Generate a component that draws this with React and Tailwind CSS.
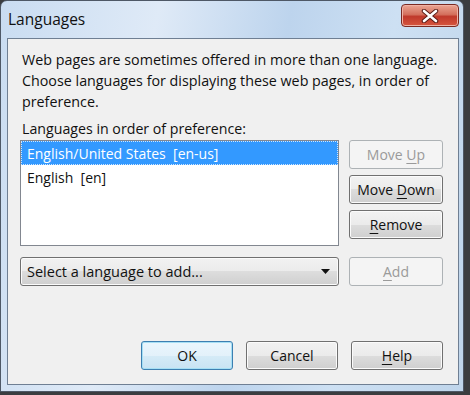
import React from "react";

function Btn({ children, className = "", disabled = false, isDefault = false }) {
  const base =
    "flex items-center justify-center h-[29px] rounded-[3px] border text-[14px] leading-none select-none";
  const look = disabled
    ? "border-[#adb2b5] bg-[#f4f4f4] text-[#9a9a9a]"
    : isDefault
    ? "border-[#3c7fb1] bg-[linear-gradient(#eaf6fd,#e3f1fa_50%,#d5ebf7_50%,#c8e3f3)] shadow-[inset_0_0_0_1px_#a6dff4] text-[#111]"
    : "border-[#707070] bg-[linear-gradient(#f2f2f2,#ebebeb_50%,#dddddd_50%,#cfcfcf)] shadow-[inset_0_0_0_1px_#fbfbfb] text-[#111]";
  return (
    <div className={`${base} ${look} ${className}`}>
      <span className="whitespace-pre">{children}</span>
    </div>
  );
}

function U({ children }) {
  return <span className="underline underline-offset-[3px] decoration-1">{children}</span>;
}

export default function App() {
  return (
    <div className="w-[470px] h-[395px] bg-[#3b3d40] overflow-hidden font-['Open_Sans',sans-serif] text-[#111]">
      <div className="w-[464px] h-[392px] rounded-t-[7px] border border-[#4e5866] bg-[linear-gradient(100deg,#c9dcf1_0%,#dfeaf7_30%,#bdd4ed_55%,#cde0f3_75%,#bfd5eb_100%)] flex flex-col">
        {/* Title bar */}
        <div className="h-[37px] flex items-start justify-between pl-[7px] pr-[4px]">
          <div className="mt-[8px] text-[15.5px] leading-[20px] text-[#111]">Languages</div>
          <div className="mt-[3px] w-[58px] h-[23px] rounded-[4px] border border-[#7a2a22] bg-[linear-gradient(#eba593,#d4705d_45%,#c0392b_55%,#d6563f)] shadow-[inset_0_0_0_1px_#f0b2a5] flex items-center justify-center">
            <svg width="18" height="14" viewBox="0 0 18 14">
              <path d="M3 2 L15 12 M15 2 L3 12" stroke="#5a1c16" strokeWidth="4.5" strokeLinecap="round" />
              <path d="M3 2 L15 12 M15 2 L3 12" stroke="#ffffff" strokeWidth="2.6" strokeLinecap="round" />
            </svg>
          </div>
        </div>

        {/* Client area */}
        <div className="ml-[6px] mr-[4px] mb-[6px] flex-1 border border-[#6f7f93] bg-[#f0f0f0] flex flex-col pl-[12px] pr-[15px] pt-[10px] pb-[14px]">
          <p className="ml-[2px] text-[14.3px] leading-[21px] whitespace-nowrap">
            Web pages are sometimes offered in more than one language.
            <br />
            Choose languages for displaying these web pages, in order of
            <br />
            preference.
          </p>
          <div className="ml-[2px] mt-[6px] text-[14.2px] leading-[21px] whitespace-nowrap">Languages in order of preference:</div>

          <div className="mt-[1px] flex gap-[10px]">
            <div className="flex-1 h-[106px] border border-[#828790] bg-white flex flex-col">
              <div className="h-[24px] bg-[#3399ff] border border-dotted border-[#cfe6ff] text-white text-[14px] flex items-center pl-[5px] whitespace-pre">
                English/United States  [en-us]
              </div>
              <div className="h-[24px] text-[14px] flex items-center pl-[6px] whitespace-pre">English  [en]</div>
            </div>
            <div className="w-[94px] flex flex-col gap-[6px]">
              <Btn disabled>
                Move <U>U</U>p
              </Btn>
              <Btn className="text-[14.8px]">
                Move <U>D</U>own
              </Btn>
              <Btn>
                <U>R</U>emove
              </Btn>
            </div>
          </div>

          <div className="mt-[11px] flex gap-[10px]">
            <div className="flex-1 h-[29px] rounded-[3px] border border-[#707070] bg-[linear-gradient(#f2f2f2,#ebebeb_50%,#dddddd_50%,#cfcfcf)] shadow-[inset_0_0_0_1px_#fbfbfb] flex items-center justify-between pl-[6px] pr-[8px] text-[14.5px]">
              <span className="whitespace-nowrap">Select a language to add...</span>
              <svg width="9" height="5" viewBox="0 0 9 5">
                <path d="M0 0 H9 L4.5 5 Z" fill="#111" />
              </svg>
            </div>
            <Btn disabled className="w-[94px]">
              <U>A</U>dd
            </Btn>
          </div>

          <div className="mt-auto flex justify-end gap-[13px]">
            <Btn isDefault className="w-[92px]">OK</Btn>
            <Btn className="w-[92px]">Cancel</Btn>
            <Btn className="w-[92px]">
              <U>H</U>elp
            </Btn>
          </div>
        </div>
      </div>
    </div>
  );
}
